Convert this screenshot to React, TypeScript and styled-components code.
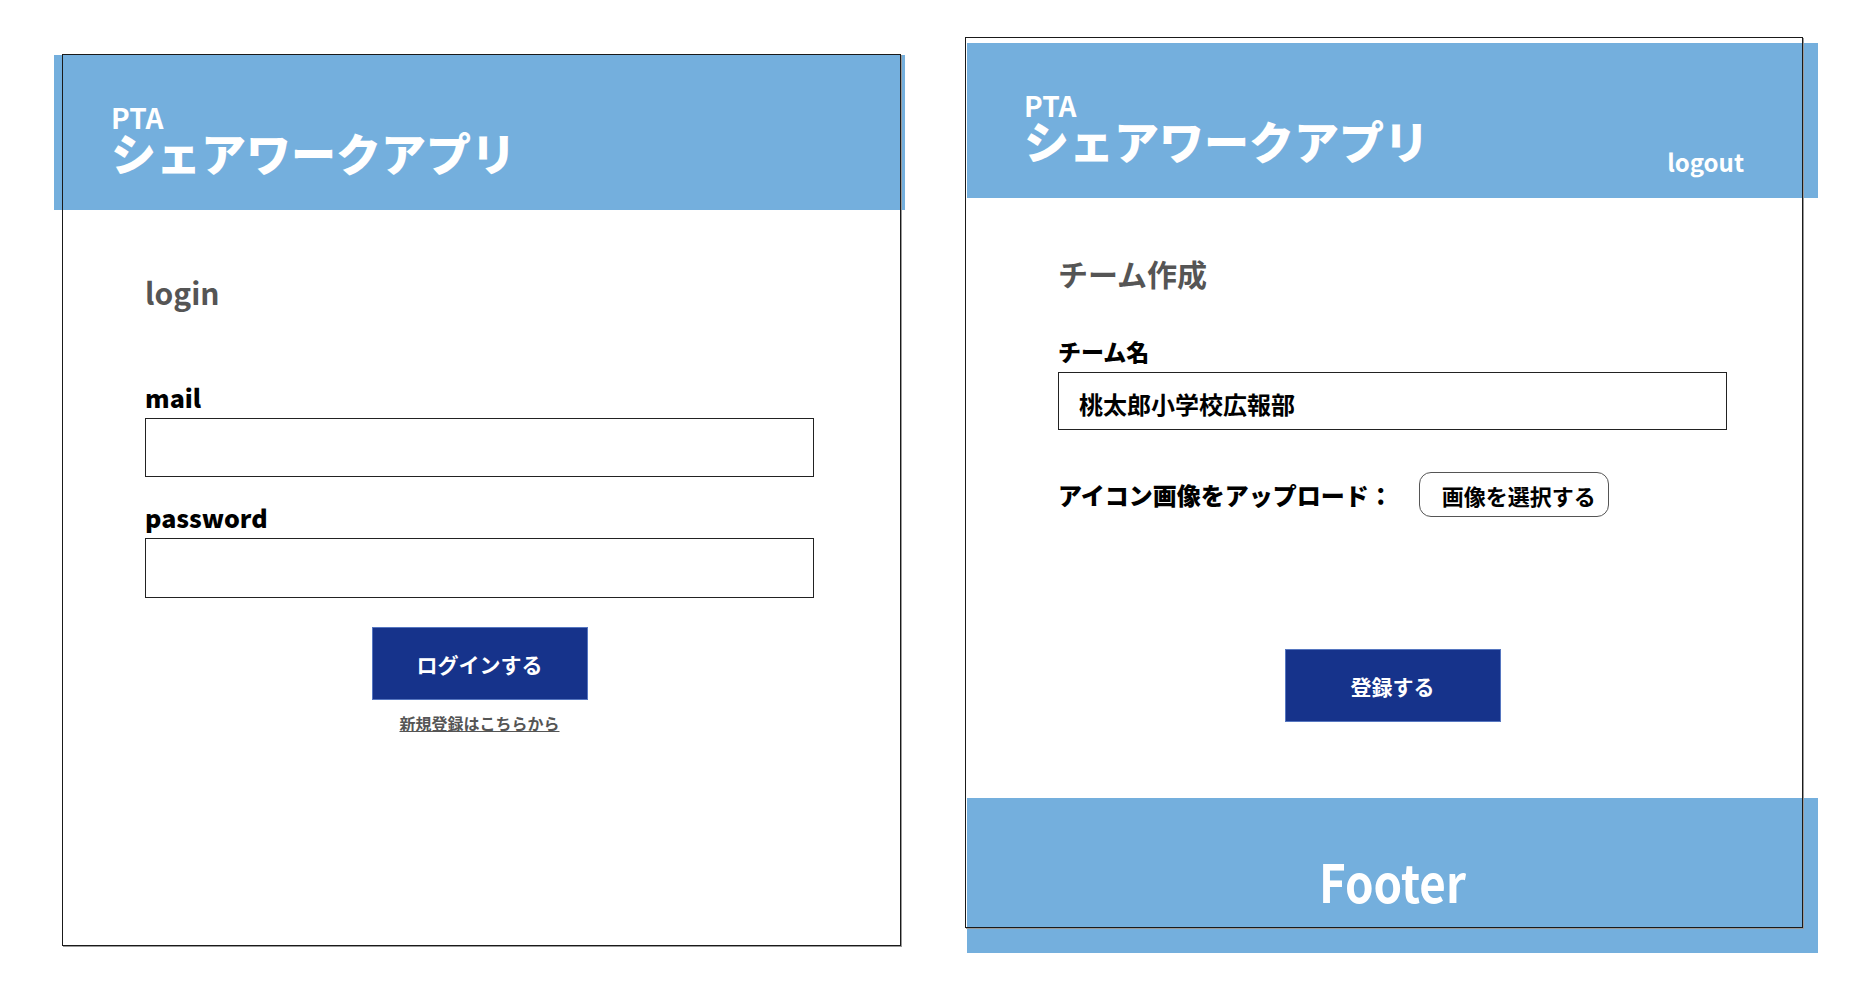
import React from 'react';
import styled, { createGlobalStyle } from 'styled-components';

const GlobalStyle = createGlobalStyle`
  html, body {
    margin: 0;
    padding: 0;
    background: #ffffff;
  }
  body {
    font-family: 'Noto Sans CJK JP', 'Noto Sans', sans-serif;
  }
`;

const Canvas = styled.div`
  display: flex;
  align-items: flex-start;
  gap: 62px;
  width: 1874px;
  height: 994px;
  padding-left: 54px;
  box-sizing: border-box;
  overflow: hidden;
`;

const Screen = styled.div<{ $top: number }>`
  position: relative;
  width: 851px;
  margin-top: ${p => p.$top}px;
  display: flex;
  flex-direction: column;
`;

// the black device outline sits a few px off the screen itself
const Frame = styled.div<{ $left: number; $top: number; $w: number; $h: number }>`
  position: absolute;
  left: ${p => p.$left}px;
  top: ${p => p.$top}px;
  width: ${p => p.$w}px;
  height: ${p => p.$h}px;
  border: 1px solid #1a1a1a;
  box-shadow: 1px 1px 0 #9a9a9a;
  box-sizing: border-box;
  pointer-events: none;
`;

const Header = styled.header`
  height: 155px;
  box-sizing: border-box;
  padding: 50px 74px 0 57px;
  background: #74afdd;
  display: flex;
  justify-content: space-between;
  color: #ffffff;
`;

const Brand = styled.div`
  display: flex;
  flex-direction: column;
  gap: 2px;
`;

const BrandSub = styled.span`
  font-size: 28px;
  line-height: 24px;
  font-weight: 700;
`;

const BrandName = styled.span`
  font-size: 45px;
  line-height: 44px;
  font-weight: 900;
`;

const Logout = styled.span`
  align-self: flex-end;
  margin-bottom: 21px;
  font-size: 24px;
  line-height: 30px;
  font-weight: 700;
`;

const Body = styled.main<{ $minHeight?: number }>`
  display: flex;
  flex-direction: column;
  padding: 0 91px;
  min-height: ${p => p.$minHeight ?? 0}px;
  box-sizing: border-box;
`;

const PageTitle = styled.h1<{ $size: number; $gap: number }>`
  margin: ${p => p.$gap}px 0 0;
  font-size: ${p => p.$size}px;
  line-height: ${p => Math.round(p.$size * 1.2)}px;
  font-weight: 700;
  color: #555555;
`;

const FieldLabel = styled.label<{ $gap: number; $size: number }>`
  display: block;
  margin: ${p => p.$gap}px 0 6px;
  font-size: ${p => p.$size}px;
  line-height: 30px;
  font-weight: 900;
  color: #000000;
`;

const TextBox = styled.input<{ $height: number }>`
  width: 100%;
  height: ${p => p.$height}px;
  box-sizing: border-box;
  padding: 4px 20px 0;
  border: 1px solid #222222;
  border-radius: 0;
  background: #ffffff;
  font-family: 'Noto Sans CJK JP', 'Noto Sans', sans-serif;
  font-size: 24px;
  font-weight: 700;
  color: #000000;
  outline: none;
`;

const PrimaryButton = styled.button<{ $gap: number }>`
  align-self: center;
  width: 216px;
  height: 73px;
  margin-top: ${p => p.$gap}px;
  border: 1px solid #5676c0;
  background: #16338b;
  color: #ffffff;
  font-family: 'Noto Sans CJK JP', 'Noto Sans', sans-serif;
  font-size: 21px;
  font-weight: 700;
  cursor: pointer;
`;

const SignupLink = styled.a`
  align-self: center;
  margin-top: 13px;
  font-size: 16px;
  line-height: 20px;
  font-weight: 700;
  color: #555555;
  text-decoration: underline;
`;

const UploadRow = styled.div`
  display: flex;
  align-items: center;
  gap: 26px;
  margin-top: 42px;
  height: 45px;
`;

const UploadLabel = styled.span`
  font-size: 24px;
  line-height: 30px;
  font-weight: 900;
  color: #000000;
`;

const PickButton = styled.button`
  height: 45px;
  padding: 0 12px 0 22px;
  border: 1px solid #555555;
  border-radius: 12px;
  background: #ffffff;
  color: #000000;
  font-family: 'Noto Sans CJK JP', 'Noto Sans', sans-serif;
  font-size: 22px;
  font-weight: 700;
`;

const Footer = styled.footer`
  height: 155px;
  box-sizing: border-box;
  padding-top: 10px;
  background: #74afdd;
  display: flex;
  align-items: center;
  justify-content: center;
  color: #ffffff;
`;

const FooterText = styled.span`
  display: inline-block;
  font-size: 52px;
  line-height: 60px;
  font-weight: 700;
  transform: scaleX(0.88);
`;

function AppHeader({ logout }: { logout?: boolean }) {
  return (
    <Header>
      <Brand>
        <BrandSub>PTA</BrandSub>
        <BrandName>シェアワークアプリ</BrandName>
      </Brand>
      {logout && <Logout>logout</Logout>}
    </Header>
  );
}

export default function App() {
  return (
    <>
      <GlobalStyle />
      <Canvas>
        {/* ログイン画面 */}
        <Screen $top={55}>
          <AppHeader />
          <Body>
            <PageTitle $size={30} $gap={64}>login</PageTitle>
            <FieldLabel $gap={72} $size={25}>mail</FieldLabel>
            <TextBox $height={59} type="text" />
            <FieldLabel $gap={25} $size={25}>password</FieldLabel>
            <TextBox $height={60} type="password" />
            <PrimaryButton $gap={29} type="button">ログインする</PrimaryButton>
            <SignupLink href="#">新規登録はこちらから</SignupLink>
          </Body>
          <Frame $left={8} $top={-1} $w={839} $h={892} />
        </Screen>

        {/* チーム作成画面 */}
        <Screen $top={43}>
          <AppHeader logout />
          <Body $minHeight={600}>
            <PageTitle $size={30} $gap={57}>チーム作成</PageTitle>
            <FieldLabel $gap={45} $size={23}>チーム名</FieldLabel>
            <TextBox $height={58} type="text" defaultValue="桃太郎小学校広報部" />
            <UploadRow>
              <UploadLabel>アイコン画像をアップロード：</UploadLabel>
              <PickButton type="button">画像を選択する</PickButton>
            </UploadRow>
            <PrimaryButton $gap={132} type="button">登録する</PrimaryButton>
          </Body>
          <Footer>
            <FooterText>Footer</FooterText>
          </Footer>
          <Frame $left={-2} $top={-6} $w={838} $h={891} />
        </Screen>
      </Canvas>
    </>
  );
}
